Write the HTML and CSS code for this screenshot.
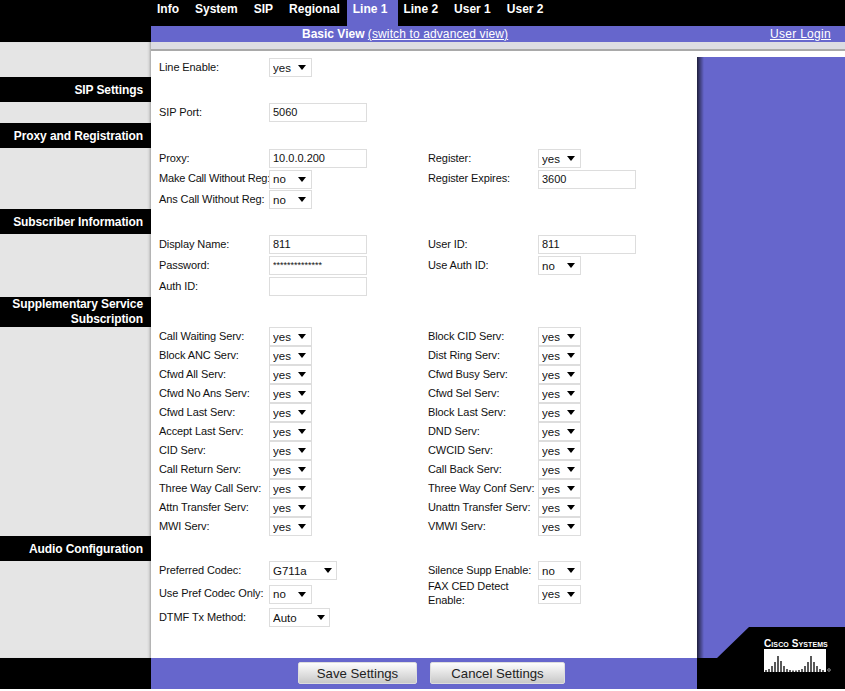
FILE: index.html
```html
<!DOCTYPE html>
<html lang="en">
<head>
    <meta charset="UTF-8">
    <title>Line 1 - Basic View</title>
    <link rel="stylesheet" href="styles.css">
</head>
<body>
    <div class="top">
        <div class="brand"><span>Voice</span></div>
        <div class="tabs">
            <a href="#">Info</a>
            <a href="#">System</a>
            <a href="#">SIP</a>
            <a href="#">Regional</a>
            <a href="#" class="active">Line 1</a>
            <a href="#">Line 2</a>
            <a href="#">User 1</a>
            <a href="#">User 2</a>
        </div>
    </div>
    <div class="viewbar">
        <div class="viewtext"><b>Basic View</b> <a href="#">(switch to advanced view)</a></div>
        <a href="#" class="login">User Login</a>
    </div>

    <div class="page">
        <div class="side">
            <h2 class="h-sip">SIP Settings</h2>
            <h2 class="h-proxy">Proxy and Registration</h2>
            <h2 class="h-sub">Subscriber Information</h2>
            <h2 class="h-supp">Supplementary Service Subscription</h2>
            <h2 class="h-audio">Audio Configuration</h2>
        </div>

        <div class="main">
            <div class="group">
                <div class="row">
                    <label>Line Enable:</label>
                    <span class="sel"><select><option>yes</option></select></span>
                </div>
            </div>

            <div class="group g-port">
                <div class="row">
                    <label>SIP Port:</label>
                    <input type="text" value="5060">
                </div>
            </div>

            <div class="group g-proxy">
                <div class="row">
                    <label>Proxy:</label>
                    <input type="text" value="10.0.0.200">
                    <label>Register:</label>
                    <span class="sel"><select><option>yes</option></select></span>
                </div>
                <div class="row">
                    <label class="long">Make Call Without Reg:</label>
                    <span class="sel"><select><option>no</option></select></span>
                    <label>Register Expires:</label>
                    <input type="text" value="3600">
                </div>
                <div class="row">
                    <label>Ans Call Without Reg:</label>
                    <span class="sel"><select><option>no</option></select></span>
                </div>
            </div>

            <div class="group g-sub">
                <div class="row">
                    <label>Display Name:</label>
                    <input type="text" value="811">
                    <label>User ID:</label>
                    <input type="text" value="811">
                </div>
                <div class="row">
                    <label>Password:</label>
                    <input type="text" class="pass" value="**************">
                    <label>Use Auth ID:</label>
                    <span class="sel"><select><option>no</option></select></span>
                </div>
                <div class="row">
                    <label>Auth ID:</label>
                    <input type="text">
                </div>
            </div>

            <div class="group g-supp">
                <div class="row">
                    <label>Call Waiting Serv:</label>
                    <span class="sel"><select><option>yes</option></select></span>
                    <label>Block CID Serv:</label>
                    <span class="sel"><select><option>yes</option></select></span>
                </div>
                <div class="row">
                    <label>Block ANC Serv:</label>
                    <span class="sel"><select><option>yes</option></select></span>
                    <label>Dist Ring Serv:</label>
                    <span class="sel"><select><option>yes</option></select></span>
                </div>
                <div class="row">
                    <label>Cfwd All Serv:</label>
                    <span class="sel"><select><option>yes</option></select></span>
                    <label>Cfwd Busy Serv:</label>
                    <span class="sel"><select><option>yes</option></select></span>
                </div>
                <div class="row">
                    <label>Cfwd No Ans Serv:</label>
                    <span class="sel"><select><option>yes</option></select></span>
                    <label>Cfwd Sel Serv:</label>
                    <span class="sel"><select><option>yes</option></select></span>
                </div>
                <div class="row">
                    <label>Cfwd Last Serv:</label>
                    <span class="sel"><select><option>yes</option></select></span>
                    <label>Block Last Serv:</label>
                    <span class="sel"><select><option>yes</option></select></span>
                </div>
                <div class="row">
                    <label>Accept Last Serv:</label>
                    <span class="sel"><select><option>yes</option></select></span>
                    <label>DND Serv:</label>
                    <span class="sel"><select><option>yes</option></select></span>
                </div>
                <div class="row">
                    <label>CID Serv:</label>
                    <span class="sel"><select><option>yes</option></select></span>
                    <label>CWCID Serv:</label>
                    <span class="sel"><select><option>yes</option></select></span>
                </div>
                <div class="row">
                    <label>Call Return Serv:</label>
                    <span class="sel"><select><option>yes</option></select></span>
                    <label>Call Back Serv:</label>
                    <span class="sel"><select><option>yes</option></select></span>
                </div>
                <div class="row">
                    <label>Three Way Call Serv:</label>
                    <span class="sel"><select><option>yes</option></select></span>
                    <label>Three Way Conf Serv:</label>
                    <span class="sel"><select><option>yes</option></select></span>
                </div>
                <div class="row">
                    <label>Attn Transfer Serv:</label>
                    <span class="sel"><select><option>yes</option></select></span>
                    <label>Unattn Transfer Serv:</label>
                    <span class="sel"><select><option>yes</option></select></span>
                </div>
                <div class="row">
                    <label>MWI Serv:</label>
                    <span class="sel"><select><option>yes</option></select></span>
                    <label>VMWI Serv:</label>
                    <span class="sel"><select><option>yes</option></select></span>
                </div>
            </div>

            <div class="group g-audio">
                <div class="row">
                    <label>Preferred Codec:</label>
                    <span class="sel"><select class="codec"><option>G711a</option></select></span>
                    <label>Silence Supp Enable:</label>
                    <span class="sel"><select><option>no</option></select></span>
                </div>
                <div class="row">
                    <label>Use Pref Codec Only:</label>
                    <span class="sel"><select><option>no</option></select></span>
                    <label class="wrap">FAX CED Detect Enable:</label>
                    <span class="sel"><select><option>yes</option></select></span>
                </div>
                <div class="row">
                    <label>DTMF Tx Method:</label>
                    <span class="sel"><select class="dtmf"><option>Auto</option></select></span>
                </div>
            </div>
        </div>

        <div class="right">
            <div class="panel">
                <svg class="corner" width="148" height="31" viewBox="0 0 148 31">
                    <polygon points="52,0 148,0 148,31 0,31 20,31"/>
                </svg>
                <div class="logo">
                    <div class="logo-name">Cisco Systems</div>
                    <svg class="logo-bars" width="68" height="23" viewBox="0 0 68 23">
                        <rect width="62" height="23" fill="#fff"/>
                        <path d="M2 23v-2M5 23v-3M8 23v-6M11 23v-10M14 23v-16M17 23v-11M20 23v-6M23 23v-3M26 23v-2M29 23v-1.500M32 23v-1.500M35 23v-2M38 23v-3M41 23v-6M44 23v-10M47 23v-16M50 23v-10M53 23v-6M56 23v-3M59 23v-2" stroke="#000" stroke-width="1.3"/>
                        <circle cx="65" cy="21" r="1.300" fill="none" stroke="#ccc" stroke-width="0.7"/>
                    </svg>
                </div>
            </div>
        </div>
    </div>

    <div class="foot">
        <div class="foot-side"></div>
        <div class="foot-main">
            <button class="btn btn-save">Save Settings</button>
            <button class="btn btn-cancel">Cancel Settings</button>
        </div>
        <div class="foot-right"></div>
    </div>
</body>
</html>
```

FILE: styles.css
```css
body {
    font-family: "Liberation Sans", Arial, sans-serif;
    margin: 0;
    padding: 0;
    background-color: #fff;
    color: #111;
    font-size: 11px;
    overflow: hidden;
}
a {
    color: #fff;
}
.top {
    display: flex;
    height: 26px;
    background-color: #000;
}
.brand {
    width: 151px;
    height: 26px;
    position: relative;
    overflow: hidden;
}
.brand span {
    position: absolute;
    left: 52px;
    top: -13px;
    color: #fff;
    font-size: 14px;
    font-weight: bold;
    letter-spacing: 3px;
}
.tabs {
    display: flex;
    padding-left: 6px;
}
.tabs a {
    color: #fff;
    font-size: 12px;
    font-weight: bold;
    line-height: 18px;
    height: 26px;
    margin-right: 16px;
    text-decoration: none;
}
.tabs a.active {
    background-color: #6666cc;
    padding: 0 11px 0 6px;
    margin: 0 5px 0 -9px;
}
.viewbar {
    display: flex;
    justify-content: space-between;
    height: 16px;
    background: linear-gradient(to right, #000 151px, #6666cc 151px);
    color: #fff;
    font-size: 12px;
    line-height: 17px;
    padding: 0 14px 0 302px;
}
.viewtext a {
    letter-spacing: 0.12px;
}
.login {
    letter-spacing: 0.3px;
}
.page {
    display: grid;
    grid-template-columns: 151px 546px 148px;
    height: 616px;
}
.side {
    background-color: #e5e5e5;
    box-shadow: inset -3px 0 3px -2px #999;
    overflow: hidden;
}
.side h2 {
    margin: 0;
    background-color: #000;
    color: #fff;
    font-size: 12px;
    letter-spacing: -0.1px;
    line-height: 15px;
    text-align: right;
    padding: 6px 8px 4px;
    height: 15px;
}
.side .h-sip { margin-top: 35px; }
.side .h-proxy { margin-top: 21px; }
.side .h-sub { margin-top: 61px; }
.side .h-supp { margin-top: 63px; height: 30px; padding: 0 8px; }
.side .h-audio { margin-top: 209px; }
.main {
    border-top: 9px solid #dcdce2;
    padding: 7px 0 0 8px;
    position: relative;
}
.main::before {
    content: "";
    position: absolute;
    left: 0;
    right: 0;
    top: -2px;
    height: 2px;
    background-color: #a9a9a9;
}
.group {
    display: flex;
    flex-direction: column;
}
.g-port { margin-top: 26px; }
.g-proxy { margin-top: 27px; gap: 1.5px; }
.g-sub { margin-top: 26px; gap: 2px; }
.g-supp { margin-top: 31px; }
.g-audio { margin-top: 25px; gap: 4.5px; }
.row {
    display: grid;
    grid-template-columns: 110px 159px 110px 1fr;
    grid-template-rows: 19px;
    align-items: center;
    height: 19px;
}
.row label {
    line-height: 14px;
    letter-spacing: -0.1px;
    padding-bottom: 2px;
    white-space: nowrap;
}
.row label.long {
    letter-spacing: -0.2px;
}
.row label.wrap {
    white-space: normal;
}
input {
    box-sizing: border-box;
    width: 98px;
    height: 19px;
    border: 1px solid #ddd;
    padding: 0 2px 1px 3px;
    font-family: inherit;
    font-size: 11px;
    color: #111;
}
input.pass {
    font-size: 9px;
}
.sel {
    position: relative;
    display: block;
    height: 19px;
}
.sel::after {
    content: "";
    position: absolute;
    left: 29px;
    top: 7px;
    border-left: 4.5px solid transparent;
    border-right: 4.5px solid transparent;
    border-top: 5px solid #000;
    pointer-events: none;
}
.sel:has(.codec)::after { left: 55px; }
.sel:has(.dtmf)::after { left: 48px; }
select {
    appearance: none;
    box-sizing: border-box;
    display: block;
    width: 43px;
    height: 19px;
    border: 1px solid #ddd;
    border-radius: 0;
    background-color: #fff;
    padding: 1px 3px;
    font-family: inherit;
    font-size: 11.5px;
    color: #111;
}
select.codec { width: 68px; }
select.dtmf { width: 61px; }
.right {
    border-top: 9px solid #dcdce2;
    position: relative;
}
.right::before {
    content: "";
    position: absolute;
    left: 0;
    right: 0;
    top: -2px;
    height: 2px;
    background-color: #a9a9a9;
}
.panel {
    position: absolute;
    left: 0;
    right: 0;
    top: 6px;
    bottom: 0;
    background: linear-gradient(to right, #20203c, #6666cc 7px);
}
.corner {
    position: absolute;
    left: 0;
    bottom: 0;
    display: block;
}
.logo {
    position: absolute;
    left: 67px;
    bottom: -14px;
}
.logo-name {
    color: #fff;
    font-size: 10px;
    font-weight: bold;
    font-variant: small-caps;
    letter-spacing: 0.1px;
    line-height: 11px;
    white-space: nowrap;
}
.logo-bars {
    display: block;
}
.foot {
    display: grid;
    grid-template-columns: 151px 546px 148px;
    height: 31px;
}
.foot-side, .foot-right {
    background-color: #000;
}
.foot-main {
    background-color: #6666cc;
    padding: 4px 0 0 147px;
    display: flex;
    gap: 13px;
    align-items: flex-start;
}
.btn {
    box-sizing: border-box;
    height: 22px;
    border: 1px solid #ddd;
    border-radius: 2px;
    background: linear-gradient(to bottom, #fdfdfd, #c8c8c8);
    font-family: inherit;
    font-size: 13.2px;
    color: #222;
    padding: 0;
}
.btn-save { width: 119px; }
.btn-cancel { width: 135px; }
```
